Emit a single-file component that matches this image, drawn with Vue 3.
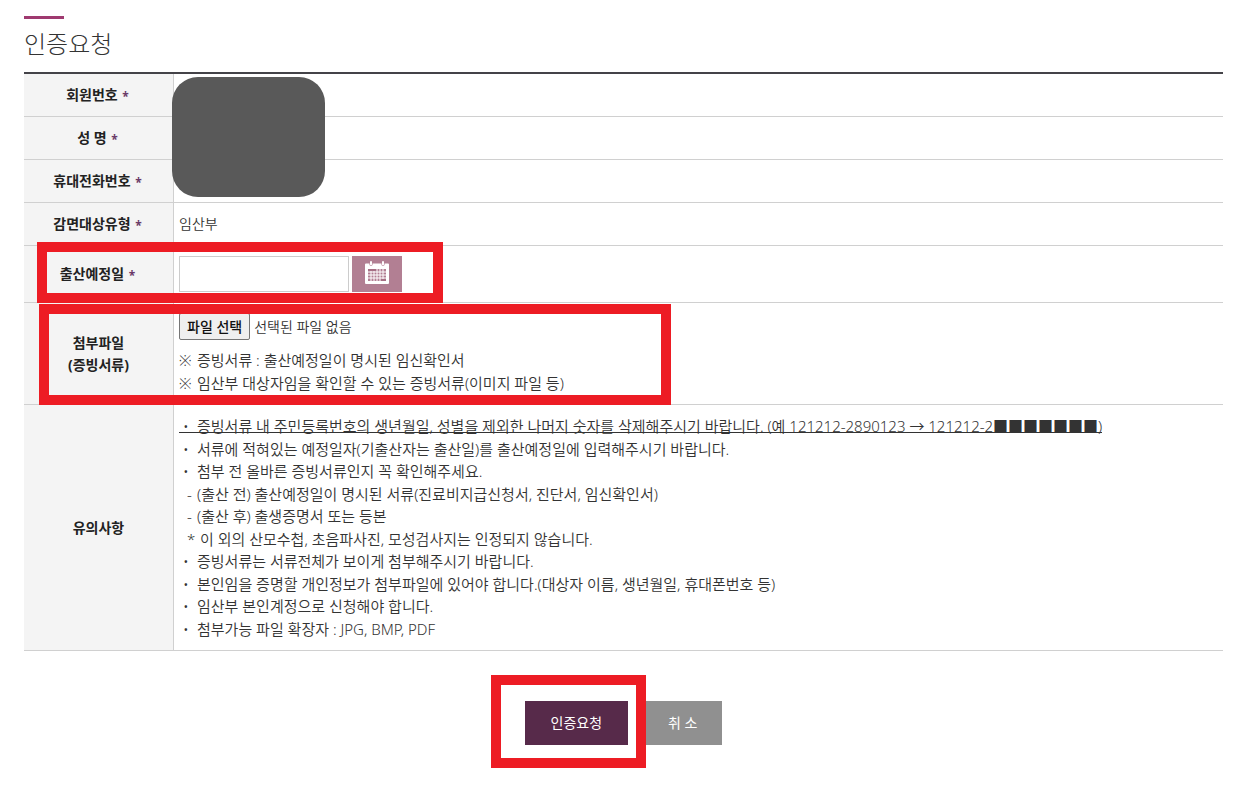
<script setup>
import { ref } from 'vue'

const dueDate = ref('')
const fileName = ref('')

const basicRows = [
  { label: '회원번호', value: '' },
  { label: '성 명', value: '' },
  { label: '휴대전화번호', value: '' },
  { label: '감면대상유형', value: '임산부' }
]

const notices = [
  { mark: '•', text: '증빙서류 내 주민등록번호의 생년월일, 성별을 제외한 나머지 숫자를 삭제해주시기 바랍니다. (예 121212-2890123 → 121212-2■■■■■■■)', kind: 'strong' },
  { mark: '•', text: '서류에 적혀있는 예정일자(기출산자는 출산일)를 출산예정일에 입력해주시기 바랍니다.' },
  { mark: '•', text: '첨부 전 올바른 증빙서류인지 꼭 확인해주세요.' },
  { mark: '-', text: '(출산 전) 출산예정일이 명시된 서류(진료비지급신청서, 진단서, 임신확인서)', kind: 'sub' },
  { mark: '-', text: '(출산 후) 출생증명서 또는 등본', kind: 'sub' },
  { mark: '*', text: '이 외의 산모수첩, 초음파사진, 모성검사지는 인정되지 않습니다.', kind: 'star' },
  { mark: '•', text: '증빙서류는 서류전체가 보이게 첨부해주시기 바랍니다.' },
  { mark: '•', text: '본인임을 증명할 개인정보가 첨부파일에 있어야 합니다.(대상자 이름, 생년월일, 휴대폰번호 등)' },
  { mark: '•', text: '임산부 본인계정으로 신청해야 합니다.' },
  { mark: '•', text: '첨부가능 파일 확장자 : JPG, BMP, PDF' }
]

function onFile(e) {
  fileName.value = e.target.files[0]?.name ?? ''
}
</script>

<template>
  <main class="page">
    <h1 class="title">인증요청</h1>
    <form @submit.prevent>
      <table class="form-table">
        <tbody>
          <tr v-for="(row, i) in basicRows" :key="row.label" class="basic">
            <th scope="row">{{ row.label }} <span class="req">*</span></th>
            <td>{{ row.value }}<span v-if="i === 0" class="mask"></span></td>
          </tr>
          <tr class="due">
            <th scope="row">
              <label for="due">출산예정일</label> <span class="req">*</span>
              <span class="frame frame-due"></span>
            </th>
            <td>
              <div class="date-field">
                <input id="due" v-model="dueDate" type="text" />
                <button type="button" class="cal" aria-label="달력">
                  <svg width="24" height="24" viewBox="0 0 24 24">
                    <path d="M1 2.500H4.500V4Q6 6 7.500 4V2.500H16.500V4Q18 6 19.500 4V2.500H23Q24 2.500 24 3.500V22Q24 23 23 23H1Q0 23 0 22V3.500Q0 2.500 1 2.500Z" fill="#fff" />
                    <path d="M6 1V3.500M18 1V3.500" stroke="#fff" stroke-width="2" stroke-linecap="round" />
                    <path d="M3 8H21V20H3Z" fill="#b27f93" />
                    <path d="M3 8H12V10H3ZM15.500 18H21V20H15.500Z" fill="#a56f84" />
                    <path d="M3 11H21M3 14H21M3 17H21M6 10V20M9 10V20M12 8V20M15 8V20M18 8V18" stroke="#fff" stroke-width="1" />
                  </svg>
                </button>
              </div>
            </td>
          </tr>
          <tr class="attach">
            <th scope="row">
              첨부파일<br />(증빙서류)
              <span class="frame frame-file"></span>
            </th>
            <td>
              <div class="file-field">
                <input id="file" class="file-input" type="file" accept=".jpg,.bmp,.pdf" @change="onFile" />
                <label for="file" class="file-btn">파일 선택</label>
                <span>{{ fileName || '선택된 파일 없음' }}</span>
              </div>
              <p class="hint"><span class="ref-mark">※</span>증빙서류 : 출산예정일이 명시된 임신확인서</p>
              <p class="hint"><span class="ref-mark">※</span>임산부 대상자임을 확인할 수 있는 증빙서류(이미지 파일 등)</p>
            </td>
          </tr>
          <tr class="notice">
            <th scope="row">유의사항</th>
            <td>
              <ul>
                <li v-for="n in notices" :key="n.text" :class="n.kind">
                  <span class="mark">{{ n.mark }}</span>{{ n.text }}
                </li>
              </ul>
            </td>
          </tr>
        </tbody>
      </table>
      <div class="actions">
        <span class="submit-wrap">
          <button type="submit" class="btn primary">인증요청</button>
          <span class="frame frame-submit"></span>
        </span>
        <button type="button" class="btn cancel">취 소</button>
      </div>
    </form>
  </main>
</template>

<style>
body {
  background: #fff;
}
</style>

<style scoped>
.page {
  padding: 16px 18px 36px 24px;
  font-family: "Noto Sans", "Noto Sans CJK KR", sans-serif;
  font-size: 14px;
  font-weight: 350;
  line-height: 22px;
  color: #333;
}
.title {
  margin: 0;
  padding: 0 0 10px;
  font-size: 24px;
  line-height: 36px;
  font-weight: 300;
}
.title::before {
  content: "";
  display: block;
  width: 40px;
  height: 3px;
  margin-bottom: 7px;
  background: #9f3a70;
}
.form-table {
  width: 100%;
  border-collapse: separate;
  border-spacing: 0;
  border-top: 2px solid #444348;
}
th,
td {
  position: relative;
  box-sizing: border-box;
  border-bottom: 1px solid #d0d0d0;
  padding: 0 5px;
}
th {
  width: 150px;
  background: #f4f4f4;
  border-right: 1px solid #d0d0d0;
  color: #222;
  font-weight: 700;
  text-align: center;
}
td {
  text-align: left;
}
.req {
  margin-left: 1px;
  padding-right: 2px;
  color: #6b3a68;
  font-size: 12px;
  line-height: 12px;
  vertical-align: -1px;
}
.basic th,
.basic td {
  height: 43px;
}
.due th {
  height: 57px;
}
.attach td {
  padding: 10px 5px 9px;
}
.notice td {
  padding: 10px 5px;
}
.mask {
  position: absolute;
  z-index: 1;
  left: -2px;
  top: 3px;
  width: 153px;
  height: 120px;
  border-radius: 26px;
  background: #595959;
}
.frame {
  position: absolute;
  z-index: 2;
  box-sizing: border-box;
  border: 10px solid #ed1c24;
  pointer-events: none;
}
.frame-due {
  left: 13px;
  top: -4px;
  width: 406px;
  height: 61px;
}
.frame-file {
  left: 15px;
  top: 1px;
  width: 632px;
  height: 101px;
}
.frame-submit {
  left: -34px;
  top: -26px;
  width: 155px;
  height: 93px;
}
.date-field {
  display: flex;
  gap: 3px;
}
.date-field input {
  box-sizing: border-box;
  width: 170px;
  height: 36px;
  padding: 0 8px;
  border: 1px solid #ccc;
  font: inherit;
}
.cal {
  display: flex;
  justify-content: center;
  width: 50px;
  height: 36px;
  padding: 5px 0 0;
  border: 0;
  background: #b27f93;
}
.file-field {
  display: flex;
  align-items: center;
  gap: 4px;
  margin-bottom: 9px;
  position: relative;
  line-height: 26px;
}
.file-input {
  position: absolute;
  width: 1px;
  height: 1px;
  opacity: 0;
}
.file-btn {
  box-sizing: border-box;
  height: 27px;
  padding: 0 7px;
  border: 1px solid #767676;
  border-radius: 2px;
  background: #efefef;
  color: #111;
  font-weight: 500;
}
.hint {
  margin: 0;
  font-size: 15px;
  line-height: 23px;
}
.ref-mark {
  display: inline-block;
  width: 18px;
}
ul {
  list-style: none;
  margin: 0;
  padding: 0;
  font-size: 15px;
  line-height: 1.5;
}
.mark {
  display: inline-block;
  box-sizing: border-box;
  width: 18px;
  padding-left: 4px;
}
.sub .mark {
  padding-left: 8px;
}
.star .mark {
  width: 21px;
  padding-left: 8px;
}
.strong {
  width: fit-content;
  background: linear-gradient(#333, #333) 0 17px / 100% 1px no-repeat;
}
.actions {
  display: flex;
  justify-content: center;
  gap: 15px;
  padding-top: 50px;
}
.submit-wrap {
  position: relative;
}
.btn {
  display: block;
  height: 44px;
  padding: 0 26px;
  border: 0;
  color: #fff;
  font: inherit;
  font-weight: 400;
}
.primary {
  background: #572a4a;
}
.cancel {
  padding: 0 25px;
  background: #909090;
}
</style>
